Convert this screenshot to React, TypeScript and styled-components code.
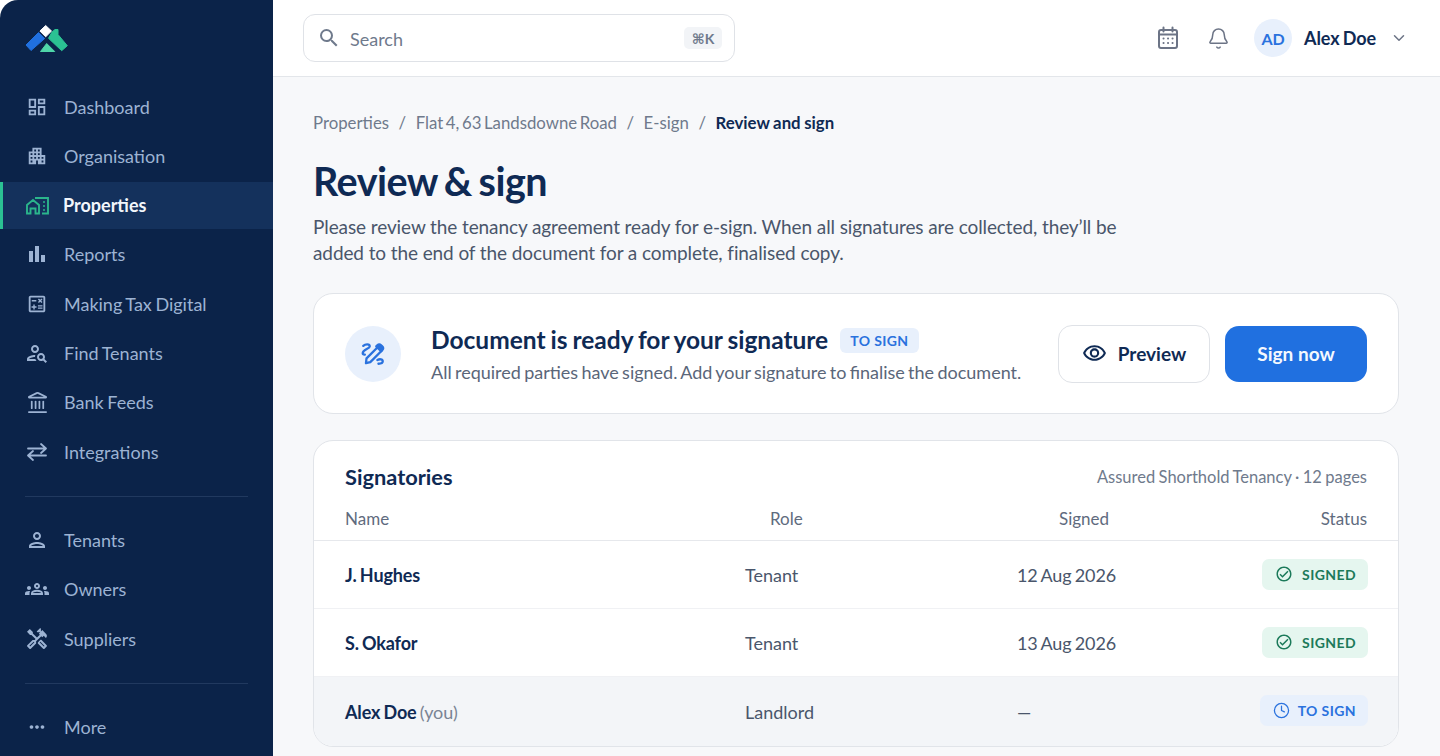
import React from 'react';
import styled, { createGlobalStyle } from 'styled-components';
import {
  MdOutlineDashboard,
  MdApartment,
  MdBarChart,
  MdOutlineCalculate,
  MdOutlinePersonSearch,
  MdOutlinePerson,
  MdOutlineGroups,
  MdOutlineHandyman,
  MdMoreHoriz,
  MdSearch,
  MdOutlineVisibility,
  MdOutlineCheckCircle,
} from 'react-icons/md';
import { Bell, ChevronDown, Clock, Landmark } from 'lucide-react';

const GlobalStyle = createGlobalStyle`
  html, body {
    margin: 0;
    height: 100%;
    background: #fff;
    overflow: hidden;
  }
  body {
    font-family: Lato, "Open Sans", sans-serif;
    color: #0f2a54;
  }
  * { box-sizing: border-box; }
`;

const Shell = styled.div`
  display: flex;
  width: 1440px;
  height: 756px;
  overflow: hidden;
`;

const Sidebar = styled.aside`
  flex: 0 0 273px;
  height: 100%;
  background: #0b2349;
  border-top-left-radius: 18px;
  padding-top: 83px;
  position: relative;
`;

const LogoMark = styled.svg`
  position: absolute;
  left: 24px;
  top: 24px;
`;

const Nav = styled.nav`
  display: flex;
  flex-direction: column;
  gap: 2.3px;
`;

const NavItem = styled.a<{ $active?: boolean }>`
  display: flex;
  align-items: center;
  height: 47px;
  padding-left: ${({ $active }) => ($active ? '22px' : '25px')};
  gap: ${({ $active }) => ($active ? '14px' : '15px')};
  font-size: 18px;
  word-spacing: -1px;
  font-weight: ${({ $active }) => ($active ? 700 : 400)};
  color: ${({ $active }) => ($active ? '#f2f6fb' : '#9db3d3')};
  background: ${({ $active }) => ($active ? '#14315c' : 'transparent')};
  border-left: ${({ $active }) => ($active ? '3px solid #2bc193' : 'none')};
`;

const MoreItem = styled(NavItem)`
  margin-top: 2px;
`;

const NavIcon = styled.span`
  flex: 0 0 24px;
  width: 24px;
  height: 24px;
  display: flex;
  align-items: center;
  justify-content: center;
`;

const NavDivider = styled.hr`
  margin: 20.5px 25px 20px;
  border: 0;
  height: 1px;
  background: #21395f;
`;

const Main = styled.div`
  flex: 1;
  min-width: 0;
  display: flex;
  flex-direction: column;
  background: #f7f8fa;
`;

const Header = styled.header`
  flex: 0 0 77px;
  display: flex;
  align-items: center;
  background: #fff;
  border-bottom: 1px solid #e3e6ea;
  padding: 0 32px 0 30px;
`;

const SearchBox = styled.div`
  width: 432px;
  height: 48px;
  display: flex;
  align-items: center;
  padding: 0 12px 0 13px;
  background: #fff;
  border: 1px solid #dfe2e7;
  border-radius: 12px;
  color: #6f7a8c;
  font-size: 18px;
`;

const SearchLabel = styled.span`
  flex: 1;
  margin-left: 9px;
  padding-top: 1px;
`;

const Kbd = styled.kbd`
  font-family: Lato, "DejaVu Sans", sans-serif;
  width: 38px;
  height: 22px;
  display: flex;
  align-items: center;
  justify-content: center;
  background: #f2f4f7;
  border-radius: 5px;
  font-size: 14px;
  font-weight: 700;
  color: #6f7a8c;
`;

const HeaderRight = styled.div`
  margin-left: auto;
  display: flex;
  align-items: center;
  color: #6c7486;
`;

const CalendarButton = styled.span`
  display: flex;
  margin-right: 28px;
`;

const BellButton = styled.span`
  display: flex;
  margin-right: 24px;
`;

const Avatar = styled.span`
  width: 38px;
  height: 38px;
  border-radius: 50%;
  background: #e8f0fc;
  color: #2a72de;
  font-size: 16px;
  font-weight: 700;
  display: flex;
  align-items: center;
  justify-content: center;
`;

const UserName = styled.span`
  margin: 0 14px 0 12px;
  font-size: 18px;
  font-weight: 700;
  letter-spacing: -0.1px;
  word-spacing: -1px;
  color: #0f2a54;
`;

const Content = styled.main`
  padding: 35px 41px 0 40px;
`;

const Crumbs = styled.div`
  display: flex;
  align-items: center;
  gap: 9.5px;
  height: 21px;
  font-size: 16.8px;
  word-spacing: -1.7px;
  color: #6f7a8c;
`;

const CrumbCurrent = styled.span`
  font-weight: 700;
  word-spacing: -0.5px;
  color: #0f2a54;
`;

const Title = styled.h1`
  margin: 24px 0 0;
  font-size: 39.5px;
  line-height: 48px;
  letter-spacing: -0.5px;
  word-spacing: -2.5px;
  font-weight: 700;
  color: #0f2a54;
`;

const Intro = styled.p`
  margin: 9px 0 0;
  width: 830px;
  font-size: 19px;
  line-height: 26px;
  letter-spacing: -0.1px;
  color: #4a566b;
`;

const Card = styled.section`
  background: #fff;
  border: 1px solid #e1e4e9;
  border-radius: 20px;
`;

const SignCard = styled(Card)`
  margin-top: 27px;
  height: 121px;
  display: flex;
  align-items: center;
  padding: 0 31px;
`;

const IconCircle = styled.span`
  flex: 0 0 56px;
  height: 56px;
  border-radius: 50%;
  background: #e8f0fc;
  display: flex;
  align-items: center;
  justify-content: center;
`;

const SignText = styled.div`
  margin-left: 30px;
  flex: 1;
  padding-top: 2px;
`;

const SignHeading = styled.div`
  display: flex;
  align-items: center;
  gap: 12px;
`;

const SignTitle = styled.h2`
  margin: 0;
  font-size: 24.5px;
  line-height: 30px;
  word-spacing: -1px;
  font-weight: 700;
  color: #0f2a54;
`;

const Tag = styled.span`
  height: 25px;
  padding: 0 10px;
  display: flex;
  align-items: center;
  border-radius: 6px;
  background: #e8f0fc;
  color: #2a72de;
  font-size: 14px;
  font-weight: 700;
  letter-spacing: 0.4px;
`;

const SignSub = styled.p`
  margin: 5px 0 0;
  font-size: 18px;
  line-height: 24px;
  word-spacing: -1.3px;
  color: #5a6679;
`;

const Button = styled.button<{ $primary?: boolean }>`
  font-family: inherit;
  display: flex;
  align-items: center;
  justify-content: center;
  gap: 11px;
  font-size: 19px;
  font-weight: 700;
  border-radius: 14px;
  cursor: pointer;
  width: ${({ $primary }) => ($primary ? '142px' : '152px')};
  height: ${({ $primary }) => ($primary ? '56px' : '58px')};
  margin-left: ${({ $primary }) => ($primary ? '15px' : '0')};
  background: ${({ $primary }) => ($primary ? '#2070e0' : '#fff')};
  color: ${({ $primary }) => ($primary ? '#f4f8fe' : '#0f2a54')};
  border: ${({ $primary }) => ($primary ? '0' : '1px solid #dfe2e7')};
`;

const TableCard = styled(Card)`
  margin-top: 26px;
  height: 307px;
  overflow: hidden;
`;

const TableTop = styled.div`
  display: flex;
  align-items: center;
  justify-content: space-between;
  padding: 12px 31px 0;
  height: 59px;
`;

const TableTitle = styled.h3`
  margin: 0;
  font-size: 21.8px;
  font-weight: 700;
  color: #0f2a54;
`;

const TableMeta = styled.span`
  font-size: 16.5px;
  word-spacing: -0.8px;
  padding-top: 1px;
  color: #6f7a8c;
`;

const Row = styled.div<{ $head?: boolean; $you?: boolean }>`
  display: grid;
  grid-template-columns: 400px 272px 1fr auto;
  align-items: center;
  padding: ${({ $head, $you }) => ($head ? '0 31px 4px' : $you ? '0 30px 0 31px' : '1px 30px 0 31px')};
  height: ${({ $head, $you }) => ($head ? '41px' : $you ? '69px' : '68px')};
  border-bottom: ${({ $head, $you }) =>
    $you ? 'none' : $head ? '1px solid #e6e8ec' : '1px solid #f0f1f4'};
  background: ${({ $you }) => ($you ? '#f3f5f8' : 'transparent')};
  font-size: ${({ $head }) => ($head ? '17px' : '18px')};
  word-spacing: -1px;
  color: ${({ $head }) => ($head ? '#5f6b7e' : '#4a566b')};
`;

const HeadCell = styled.span<{ $indent?: number }>`
  padding-left: ${({ $indent }) => $indent ?? 0}px;
`;

const NameCell = styled.span`
  font-weight: 700;
  letter-spacing: -0.15px;
  color: #0f2a54;
`;

const You = styled.span`
  font-weight: 400;
  color: #7a8494;
`;

const DateCell = styled.span`
  letter-spacing: -0.15px;
`;

const Status = styled.span<{ $signed?: boolean }>`
  justify-self: end;
  display: flex;
  align-items: center;
  height: 31px;
  margin-top: -2px;
  gap: ${({ $signed }) => ($signed ? '9px' : '8px')};
  padding: 0 12px 0 13px;
  border-radius: 7px;
  font-size: 14px;
  font-weight: 700;
  letter-spacing: 0.4px;
  word-spacing: 0;
  color: ${({ $signed }) => ($signed ? '#1c7a5a' : '#2a72de')};
  background: ${({ $signed }) => ($signed ? '#e5f6ef' : '#e8f0fc')};
`;

const Logo = () => (
  <LogoMark width="46" height="32" viewBox="0 0 46 32" strokeLinejoin="round" strokeWidth="1" aria-hidden="true">
    <path d="M21.7 1.500l5.800 5.500-5.800 5.800-5.800-5.800z" fill="#fff" stroke="#fff" />
    <path d="M14.500 8.500l6.200 6L7 26.500 2 21z" fill="#2070e0" stroke="#2070e0" />
    <path d="M28 8l3-2.500h3v5l9.300 11.200L37.700 26.700 24.500 14.300z" fill="#2bc193" stroke="#2bc193" />
    <path d="M16.500 27.500l6.200-8 8 8z" fill="#4fd6a9" stroke="#4fd6a9" />
  </LogoMark>
);

const PropertiesIcon = () => (
  <svg width="24" height="19" viewBox="0 0 24 19" fill="none" stroke="#2bb58c" strokeWidth="1.900" aria-hidden="true">
    <path d="M2 17.500V9l6-5 6 5v8.500h-3.500v-5h-5v5z" />
    <path d="M10 2h13v15.500h-6" />
    <path d="M18 6h2M18 10h2M18 14h2" strokeWidth="1.500" />
  </svg>
);

const SignatureIcon = () => (
  <svg width="26" height="26" viewBox="0 0 24 24" fill="none" stroke="#2a72de" strokeWidth="2.100" strokeLinecap="round" strokeLinejoin="round" aria-hidden="true">
    <path d="M3 4.500c1.800-1.600 6-2 6 .5 0 2.200-6.500 3-6.500 6.200 0 1 .8 1.500 2 1.300" />
    <path d="M6 16L16.500 5.500l3.500 3.500L9.500 19.500l-4 1z" />
    <path d="M16 4c1-1 2.500-1 3.500 0l1 1c1 1 1 2.500 0 3.500l-1 1L15 5z" fill="#2a72de" />
    <path d="M16 17.500c2-1 5-1 5 1.300 0 1.500-2 2.200-4 2.200" />
  </svg>
);

const CalendarIcon = () => (
  <svg width="22" height="24" viewBox="0 0 22 24" fill="none" stroke="#6c7486" strokeWidth="2" strokeLinecap="round" aria-hidden="true">
    <rect x="2" y="4" width="18" height="18" rx="2" />
    <path d="M6.500 1.500v4M15.500 1.500v4M2.500 8.500h17" />
    <path d="M6.500 12.500h.1M11 12.500h.1M15.500 12.500h.1M6.500 17h.1M11 17h.1M15.500 17h.1" />
  </svg>
);

const SwapIcon = () => (
  <svg width="24" height="24" viewBox="0 0 24 24" fill="none" stroke="currentColor" strokeWidth="1.800" strokeLinecap="round" strokeLinejoin="round" aria-hidden="true">
    <path d="M3 8.500h18M16 4l5 4.500-5 4.500" />
    <path d="M21 15.500H3M8 11l-5 4.500 5 4.500" />
  </svg>
);

const mainNav = [
  { label: 'Dashboard', icon: <MdOutlineDashboard size={22} /> },
  { label: 'Organisation', icon: <MdApartment size={22} /> },
  { label: 'Properties', icon: <PropertiesIcon />, active: true },
  { label: 'Reports', icon: <MdBarChart size={24} /> },
  { label: 'Making Tax Digital', icon: <MdOutlineCalculate size={22} /> },
  { label: 'Find Tenants', icon: <MdOutlinePersonSearch size={24} /> },
  { label: 'Bank Feeds', icon: <Landmark size={23} strokeWidth={1.8} /> },
  { label: 'Integrations', icon: <SwapIcon /> },
];

const peopleNav = [
  { label: 'Tenants', icon: <MdOutlinePerson size={24} /> },
  { label: 'Owners', icon: <MdOutlineGroups size={26} /> },
  { label: 'Suppliers', icon: <MdOutlineHandyman size={24} /> },
];

const signatories = [
  { name: 'J. Hughes', role: 'Tenant', signed: '12 Aug 2026' },
  { name: 'S. Okafor', role: 'Tenant', signed: '13 Aug 2026' },
];

export default function App() {
  return (
    <Shell>
      <GlobalStyle />
      <Sidebar>
        <Logo />
        <Nav>
          {mainNav.map((item) => (
            <NavItem key={item.label} $active={item.active}>
              <NavIcon>{item.icon}</NavIcon>
              {item.label}
            </NavItem>
          ))}
        </Nav>
        <NavDivider />
        <Nav>
          {peopleNav.map((item) => (
            <NavItem key={item.label}>
              <NavIcon>{item.icon}</NavIcon>
              {item.label}
            </NavItem>
          ))}
        </Nav>
        <NavDivider />
        <MoreItem>
          <NavIcon><MdMoreHoriz size={22} /></NavIcon>
          More
        </MoreItem>
      </Sidebar>
      <Main>
        <Header>
          <SearchBox>
            <MdSearch size={24} />
            <SearchLabel>Search</SearchLabel>
            <Kbd>⌘K</Kbd>
          </SearchBox>
          <HeaderRight>
            <CalendarButton><CalendarIcon /></CalendarButton>
            <BellButton><Bell size={23} strokeWidth={1.6} /></BellButton>
            <Avatar>AD</Avatar>
            <UserName>Alex Doe</UserName>
            <ChevronDown size={18} />
          </HeaderRight>
        </Header>
        <Content>
          <Crumbs>
            <span>Properties</span>
            <span>/</span>
            <span>Flat 4, 63 Landsdowne Road</span>
            <span>/</span>
            <span>E-sign</span>
            <span>/</span>
            <CrumbCurrent>Review and sign</CrumbCurrent>
          </Crumbs>
          <Title>Review &amp; sign</Title>
          <Intro>
            Please review the tenancy agreement ready for e-sign. When all signatures are collected, they’ll be added to the end of the document for a complete, finalised copy.
          </Intro>
          <SignCard>
            <IconCircle><SignatureIcon /></IconCircle>
            <SignText>
              <SignHeading>
                <SignTitle>Document is ready for your signature</SignTitle>
                <Tag>TO SIGN</Tag>
              </SignHeading>
              <SignSub>All required parties have signed. Add your signature to finalise the document.</SignSub>
            </SignText>
            <Button><MdOutlineVisibility size={25} />Preview</Button>
            <Button $primary>Sign now</Button>
          </SignCard>
          <TableCard>
            <TableTop>
              <TableTitle>Signatories</TableTitle>
              <TableMeta>Assured Shorthold Tenancy · 12 pages</TableMeta>
            </TableTop>
            <Row $head>
              <span>Name</span>
              <HeadCell $indent={25}>Role</HeadCell>
              <HeadCell $indent={42}>Signed</HeadCell>
              <span>Status</span>
            </Row>
            {signatories.map((s) => (
              <Row key={s.name}>
                <NameCell>{s.name}</NameCell>
                <span>{s.role}</span>
                <DateCell>{s.signed}</DateCell>
                <Status $signed><MdOutlineCheckCircle size={18} />SIGNED</Status>
              </Row>
            ))}
            <Row $you>
              <NameCell>Alex Doe <You>(you)</You></NameCell>
              <span>Landlord</span>
              <DateCell>—</DateCell>
              <Status><Clock size={17} strokeWidth={1.8} />TO SIGN</Status>
            </Row>
          </TableCard>
        </Content>
      </Main>
    </Shell>
  );
}
